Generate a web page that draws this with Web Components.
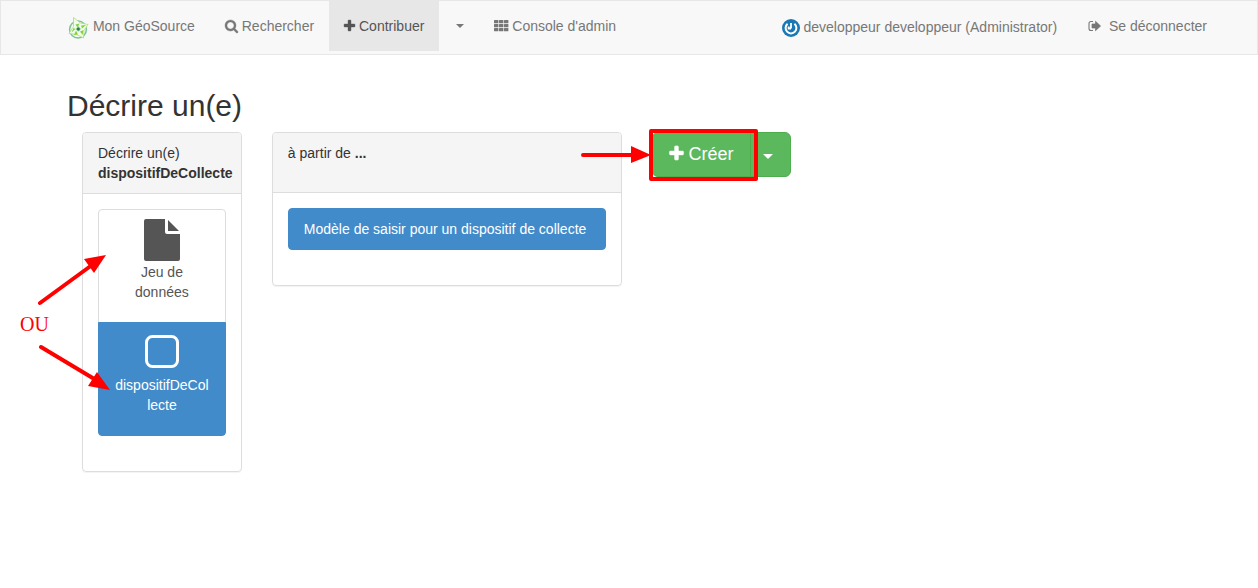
<!DOCTYPE html>
<html lang="fr">
<head>
<meta charset="utf-8">
<title>Mon GéoSource</title>
<style>
  body {
    margin: 0;
    background: #fff;
    color: #333;
    font: 14px/20px "Liberation Sans", Arial, sans-serif;
  }
</style>
</head>
<body>
<geo-app></geo-app>

<template id="t-app">
  <style>
    :host { display: block; position: relative; }
    main { padding: 34px 52px 20px 67px; }
    h1 { margin: 0 0 10px; font-size: 30px; line-height: 33px; font-weight: 500; }
    .row { display: grid; grid-template-columns: 2fr 4fr 6fr; align-items: start; }
    .row > * { margin: 0 15px; min-width: 0; }
  </style>
  <geo-navbar></geo-navbar>
  <main>
    <h1>Décrire un(e)</h1>
    <div class="row">
      <geo-panel>
        <span slot="title">Décrire un(e) <b>dispositifDeCollecte</b></span>
        <geo-choice><geo-icon slot="icon" name="file"></geo-icon>Jeu de données</geo-choice>
        <geo-choice active><geo-icon slot="icon" name="square"></geo-icon>dispositifDeCollecte</geo-choice>
      </geo-panel>
      <geo-panel>
        <span slot="title">à partir de <b>...</b></span>
        <geo-choice active row>Modèle de saisir pour un dispositif de collecte</geo-choice>
      </geo-panel>
      <geo-split-button>Créer</geo-split-button>
    </div>
  </main>
  <geo-annotations></geo-annotations>
</template>

<template id="t-navbar">
  <style>
    :host { display: block; background: #f8f8f8; border: 1px solid #e7e7e7; }
    nav { display: flex; justify-content: space-between; min-height: 53px; padding: 0 35px 0 52px; }
    div { display: flex; align-items: flex-start; }
  </style>
  <nav>
    <div>
      <geo-nav-link><geo-icon name="logo"></geo-icon> Mon GéoSource</geo-nav-link>
      <geo-nav-link><geo-icon name="search"></geo-icon> Rechercher</geo-nav-link>
      <geo-nav-link active><geo-icon name="plus"></geo-icon> Contribuer</geo-nav-link>
      <geo-nav-link label="Plus d'options"><geo-icon name="caret"></geo-icon></geo-nav-link>
      <geo-nav-link><geo-icon name="th"></geo-icon> Console d'admin</geo-nav-link>
    </div>
    <div>
      <geo-nav-link><geo-icon name="avatar"></geo-icon> developpeur developpeur (Administrator)</geo-nav-link>
      <geo-nav-link><geo-icon name="signout"></geo-icon>&nbsp; Se déconnecter</geo-nav-link>
    </div>
  </nav>
</template>

<template id="t-nav-link">
  <style>
    :host { display: block; }
    a { display: block; padding: 15px; color: #777; text-decoration: none; white-space: nowrap; }
    :host([active]) a { color: #555; background: #e7e7e7; }
  </style>
  <a href="#"><slot></slot></a>
</template>

<template id="t-panel">
  <style>
    :host { display: block; border: 1px solid #ddd; border-radius: 4px; box-shadow: 0 1px 1px rgba(0,0,0,.05); }
    header { box-sizing: border-box; min-height: 60px; padding: 10px 15px; background: #f5f5f5; border-bottom: 1px solid #ddd; border-radius: 3px 3px 0 0; }
    .body { padding: 15px 15px 35px; }
  </style>
  <header><slot name="title"></slot></header>
  <div class="body"><slot></slot></div>
</template>

<template id="t-choice">
  <style>
    :host { display: block; }
    :host(:not(:first-of-type)) { margin-top: -1px; }
    a { display: block; padding: 10px 15px 20px; border: 1px solid #ddd; color: #555; text-align: center; text-decoration: none; overflow-wrap: break-word; }
    :host(:first-of-type) a { border-radius: 4px 4px 0 0; }
    :host(:last-of-type) a { border-radius: 0 0 4px 4px; }
    :host([active]) { position: relative; }
    :host([active]) a { background: #428bca; border-color: #428bca; color: #fff; }
    :host([row]) a { padding: 10px 15px; text-align: left; border-radius: 4px; }
    ::slotted(geo-icon) { display: block; height: 42px; }
  </style>
  <a href="#"><slot name="icon"></slot><slot></slot></a>
</template>

<template id="t-split-button">
  <style>
    :host { display: flex; }
    button { margin: 0; height: 45px; border: 1px solid #4cae4c; background: #5cb85c; color: #fff; font: 18px/24px "Liberation Sans", Arial, sans-serif; white-space: nowrap; }
    .main { padding: 0 16px 2px; border-radius: 6px 0 0 6px; }
    .toggle { margin-left: -1px; padding: 0 17px 0 12px; border-radius: 0 6px 6px 0; }
  </style>
  <button class="main" type="button"><geo-icon name="plusBig"></geo-icon> <slot></slot></button><button class="toggle" type="button" aria-label="Autres options"><geo-icon name="caretBig"></geo-icon></button>
</template>

<template id="t-annotations">
  <style>
    :host { position: absolute; left: 0; top: 0; pointer-events: none; }
    svg { display: block; }
    text { font: 20px "Liberation Serif", "Times New Roman", serif; }
  </style>
  <svg width="800" height="480" viewBox="0 0 800 480" fill="#f00">
    <g stroke="#f00" stroke-width="4" stroke-linecap="round" stroke-linejoin="round" fill="none">
      <path d="M40 303L92 265M41 347L96 380M583 155H634"/>
      <path d="M651 131H756V179H651Z"/>
    </g>
    <path d="M106 255L84 259L94 273ZM110 390L97 372L88 386ZM651 155L631 146V163Z"/>
    <text x="20" y="331">OU</text>
  </svg>
</template>

<script>
  const PLUS = '<path stroke="currentColor" stroke-width="50" d="M1600 736v192q0 40-28 68t-68 28h-416v416q0 40-28 68t-68 28h-192q-40 0-68-28t-28-68v-416h-416q-40 0-68-28t-28-68v-192q0-40 28-68t68-28h416v-416q0-40 28-68t68-28h192q40 0 68 28t28 68v416h416q40 0 68 28t28 68z"/>';

  // name: [width, height, viewBox, vertical-align, shapes]
  const ICONS = {
    logo: [21, 22, '0 0 21 22', '-8px', `
      <circle cx="10" cy="12.500" r="8.400" fill="#f6fbf2" stroke="#7cc39a" stroke-width="1.500"/>
      <path d="M5.500 0.500L12.500 6L20 7.500L16 13.500L15.500 21L8.500 17.500L1 16.500L5.500 9.500Z" fill="#f4fbea" stroke="#a9dd78" stroke-width=".8"/>
      <path d="M7.500 7.500L11.500 6.500L9.500 10.500ZM13 8.500L18 8L14 11.500ZM15.500 13L14.500 18L12 14.500ZM8 13.500L10 17.500L6 18ZM3.500 15.500L5.500 11L7.500 12Z" fill="#84d33c"/>
      <path d="M10.300 9L13 12L10.500 14.800L7.500 12Z" fill="#8fd0a0"/><circle cx="10.300" cy="12" r="1.500" fill="#277c50"/>`],
    search: [13, 14, '64 0 1664 1792', '-2px', '<path stroke="currentColor" stroke-width="50" d="M1216 832q0-185-131.500-316.500t-316.500-131.500-316.500 131.500-131.500 316.500 131.500 316.500 316.500 131.500 316.500-131.500 131.500-316.500zm512 832q0 52-38 90t-90 38q-54 0-90-38l-343-342q-179 124-399 124-143 0-273.500-55.500t-225-150-150-225-55.500-273.500 55.500-273.500 150-225 225-150 273.500-55.500 273.500 55.500 225 150 150 225 55.500 273.500q0 220-124 399l343 343q37 37 37 90z"/>'],
    plus: [11, 14, '192 0 1408 1792', '-2px', PLUS],
    plusBig: [15, 18, '192 -60 1408 1792', '-2px', PLUS],
    caret: [10, 4, '-2 0 10 4', '3px', '<path d="M0 0H8L4 4Z"/>'],
    caretBig: [10, 5, '0 0 10 5', '2px', '<path d="M0 0H10L5 5Z"/>'],
    th: [14, 14, '0 0 14 14', '-2px', [1, 5, 9].map(y => [0, 5, 10].map(x => `<rect x="${x}" y="${y}" width="4.400" height="3.200" rx=".5"/>`).join('')).join('')],
    avatar: [18, 20, '0 -3 18 20', '-4px', `
      <circle cx="9" cy="9" r="9" fill="#1a78b4"/>
      <path d="M5.600 4.800A5.400 5.400 0 1 0 12.400 4.800" fill="none" stroke="#fff" stroke-width="2"/>
      <path d="M9 4V9.500M6.600 7.500V9.500H9" fill="none" stroke="#fff" stroke-width="1.800"/>`],
    signout: [14, 14, '-1 0 14 14', '-2px', `
      <path d="M5 2.500H3Q1 2.500 1 4.500V9.500Q1 11.500 3 11.500H5" fill="none" stroke="currentColor" stroke-width="1.100"/>
      <path d="M4 5H7.500V2.300L12.600 7L7.500 11.700V9H4Z" stroke="currentColor" stroke-width=".7" stroke-linejoin="round"/>`],
    file: [36, 42, '0 0 36 42', 'top', '<path d="M2 -1H21V12Q21 14 23 14H36V39Q36 41 34 41H2Q0 41 0 39V1Q0 -1 2 -1Z"/><path d="M24 0L35 11H24Z"/>'],
    square: [34, 42, '0 0 34 42', 'top', '<rect x="1.500" y="3.500" width="31" height="30" rx="6" fill="none" stroke="currentColor" stroke-width="3"/>']
  };

  class GeoElement extends HTMLElement {
    constructor() {
      super();
      this.attachShadow({ mode: 'open' });
    }
    connectedCallback() {
      if (this.shadowRoot.childNodes.length) return;
      const id = 't-' + this.localName.replace('geo-', '');
      this.shadowRoot.append(document.getElementById(id).content.cloneNode(true));
      const label = this.getAttribute('label');
      if (label) this.shadowRoot.querySelector('a').setAttribute('aria-label', label);
    }
  }

  class GeoIcon extends HTMLElement {
    constructor() {
      super();
      this.attachShadow({ mode: 'open' });
    }
    connectedCallback() {
      const [w, h, box, align, shapes] = ICONS[this.getAttribute('name')];
      this.shadowRoot.innerHTML = `<style>:host { display: inline; } svg { vertical-align: ${align}; overflow: visible; }</style>
        <svg width="${w}" height="${h}" viewBox="${box}" fill="currentColor" aria-hidden="true">${shapes}</svg>`.replace(/>\s+</g, '><');
    }
  }

  customElements.define('geo-icon', GeoIcon);
  for (const name of ['annotations', 'nav-link', 'navbar', 'panel', 'choice', 'split-button', 'app']) {
    customElements.define('geo-' + name, class extends GeoElement {});
  }
</script>
</body>
</html>
